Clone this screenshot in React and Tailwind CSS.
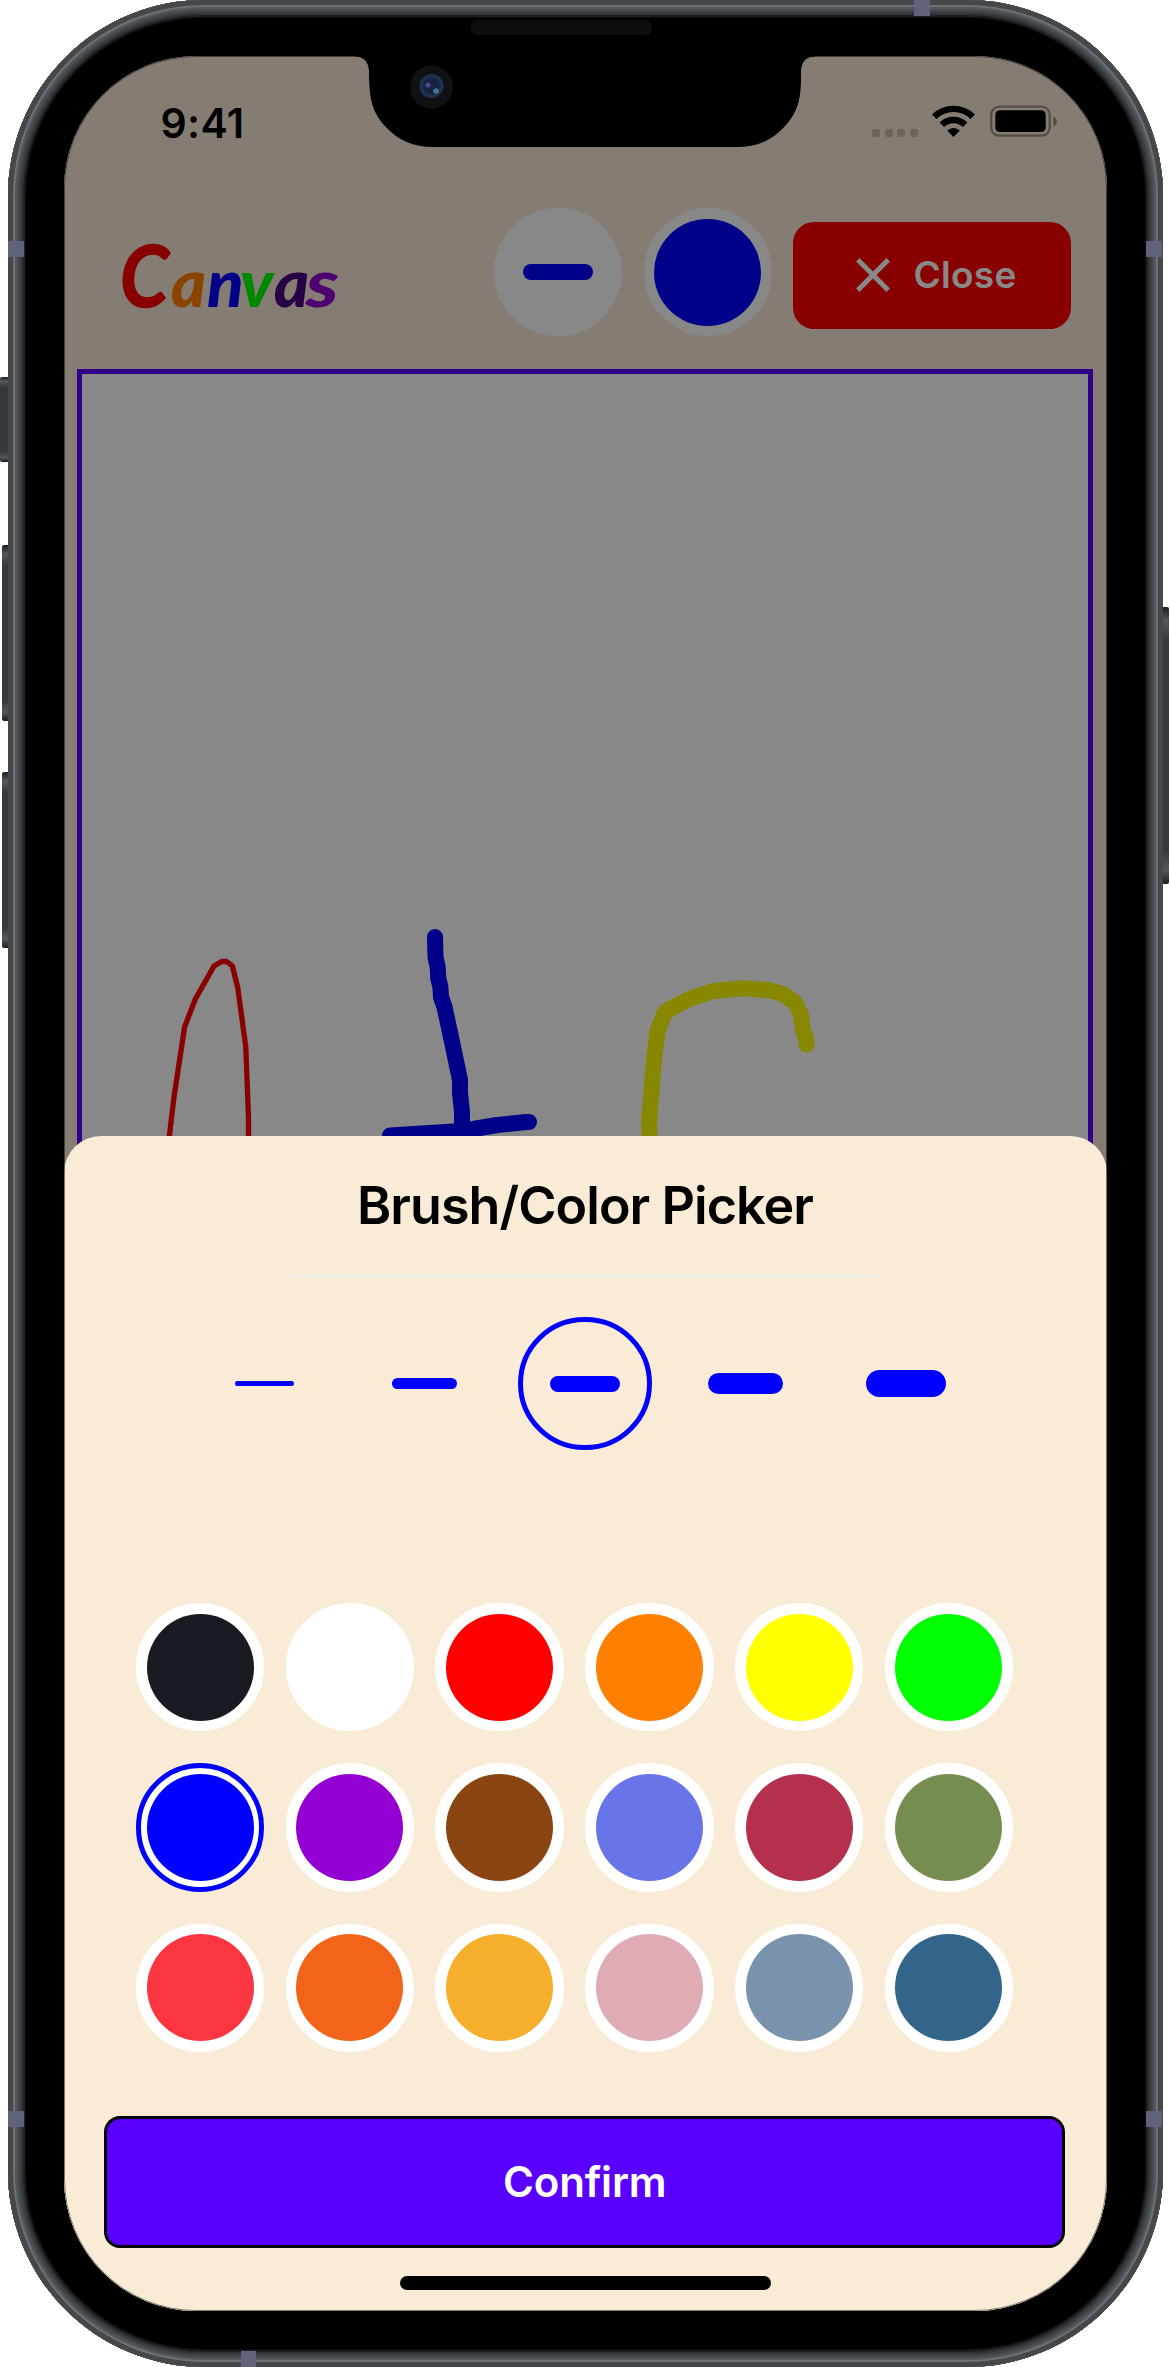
import React from "react";

const BRUSHES = [
  "w-[59px] h-[5.4px]",
  "w-[64.5px] h-[10.8px]",
  "w-[69.6px] h-[16px]",
  "w-[75px] h-[21.4px]",
  "w-[80.4px] h-[26.8px]",
];

const COLORS = [
  "bg-[#181b21]", "bg-white", "bg-[#ff0000]", "bg-[#ff8000]", "bg-[#ffff00]", "bg-[#00ff00]",
  "bg-[#0000ff]", "bg-[#9400d3]", "bg-[#8b4513]", "bg-[#6974e8]", "bg-[#b5304d]", "bg-[#758e4f]",
  "bg-[#fb3640]", "bg-[#f26419]", "bg-[#f6ae2d]", "bg-[#dfacb5]", "bg-[#7a93ac]", "bg-[#33658a]",
];

function SideButtons() {
  const button = "absolute bg-[linear-gradient(180deg,#1c1e21,#54585c_5%,#36383d_12%,#36383d_88%,#54585c_95%,#1c1e21)]";
  return (
    <>
      <div className={`${button} left-0 top-[377px] w-[10px] h-[85px] rounded-l-[2px]`} />
      <div className={`${button} left-[2px] top-[545px] w-[8px] h-[176px] rounded-l-[2px]`} />
      <div className={`${button} left-[2px] top-[772px] w-[8px] h-[176px] rounded-l-[2px]`} />
      <div className={`${button} right-[1px] top-[607px] w-[8px] h-[277px] rounded-r-[2px]`} />
    </>
  );
}

function AntennaBands() {
  const band = "absolute bg-[#5f6278]";
  return (
    <>
      <div className={`${band} left-[906px] top-0 w-[16px] h-[16px]`} />
      <div className={`${band} left-0 top-[241px] w-[16px] h-[16px]`} />
      <div className={`${band} right-px top-[241px] w-[16px] h-[16px]`} />
      <div className={`${band} left-0 top-[2111px] w-[16px] h-[16px]`} />
      <div className={`${band} right-px top-[2111px] w-[16px] h-[16px]`} />
      <div className={`${band} left-[233px] bottom-0 w-[15px] h-[16px]`} />
    </>
  );
}

function Notch() {
  return (
    <div className="absolute left-[291px] -top-px w-[460px] h-[92px] flex justify-center">
      <svg className="absolute inset-0" width="460" height="92" viewBox="0 0 460 92">
        <path
          d="M0 0H460V1.500C450 1.500 446.500 8 446 16C446.500 44 443 56 431 70C417 86 401 92 382 92H78C59 92 43 86 29 70C17 56 14 44 14 16C13.500 8 10 1.500 0 1.500Z"
          fill="#000"
        />
        <circle cx="76.500" cy="32" r="21.500" fill="#101113" />
        <circle cx="76.500" cy="31" r="12" fill="#1c3352" />
        <circle cx="76.500" cy="31" r="8.500" fill="#14233f" />
        <circle cx="73" cy="30" r="2.600" fill="#4b4a8c" />
        <circle cx="81" cy="36" r="2.800" fill="#437699" />
      </svg>
    </div>
  );
}

function StatusBar() {
  return (
    <div className="absolute inset-x-0 top-0 h-[130px]">
      <span className="absolute left-[96.500px] top-[43px] text-[41px] leading-[48px] font-semibold text-black tracking-[0.3px]">
        9:41
      </span>
      <div className="absolute left-[808px] top-[49px] flex items-end">
        <div className="flex gap-[4.500px]">
          {[0, 1, 2, 3].map((i) => (
            <i key={i} className="block size-[8px] rounded-[2px] bg-[#6d655c]" />
          ))}
        </div>
        <svg className="ml-[14.500px]" width="43" height="32" viewBox="0 0 43 32">
          <g fill="none" stroke="#000" strokeWidth="6.400">
            <path d="M2.200 11.800A27.500 27.500 0 0 1 40.800 11.800" />
            <path d="M9.800 19.800A16.600 16.600 0 0 1 33.200 19.800" />
          </g>
          <path d="M21.500 32L15.200 25.500A9 9 0 0 1 27.800 25.500Z" fill="#000" />
        </svg>
        <svg className="ml-[15px]" width="68" height="32" viewBox="0 0 68 32">
          <rect x="1.200" y="1.700" width="58.500" height="29" rx="8" fill="none" stroke="#544d46" strokeWidth="2.200" />
          <rect x="5.300" y="5.300" width="50.400" height="21.800" rx="4.500" fill="#000" />
          <path d="M63.500 11.500C68 13.500 68 19.500 63.500 21.500Z" fill="#544d46" />
        </svg>
      </div>
    </div>
  );
}

function Logo() {
  return (
    <div className="font-['Lato',sans-serif] italic font-black text-[67px] leading-[80px] flex items-baseline h-[100px] w-[220px]">
      <span className="font-bold text-[87px] w-[51px] origin-left scale-x-[0.9] text-[#ff0000] [-webkit-text-stroke:1.5px_#ff0000]">
        C
      </span>
      <span className="w-[36px] text-[#ff8000]">a</span>
      <span className="w-[33px] text-[#0000ff]">n</span>
      <span className="w-[34px] text-[#00ff00]">v</span>
      <span className="w-[32px] text-[#4b0082]">a</span>
      <span className="origin-left scale-x-[1.2] text-[#9400d3]">s</span>
    </div>
  );
}

function Header() {
  return (
    <header className="h-[313px] pt-[152px] pl-[56px] pr-[36px] flex items-start">
      <div className="mt-[26px]">
        <Logo />
      </div>
      <button className="ml-auto size-[128.400px] rounded-full bg-white flex items-center justify-center">
        <span className="w-[69.600px] h-[16px] rounded-full bg-[#0000ff]" />
      </button>
      <button className="ml-[21.200px] size-[128.400px] rounded-full bg-white flex items-center justify-center">
        <span className="size-[107px] rounded-full bg-[#0000ff]" />
      </button>
      <button className="ml-[21px] mt-[13.500px] w-[278px] h-[107px] rounded-[21px] bg-[#ff0000] text-white flex items-center pl-[63px]">
        <svg width="34" height="34" viewBox="0 0 34 34" stroke="currentColor" strokeWidth="5">
          <path d="M1.800 1.800L32.200 32.200M32.200 1.800L1.800 32.200" />
        </svg>
        <span className="ml-[23.500px] text-[37px] leading-[44px] font-semibold tracking-[0.3px]">Close</span>
      </button>
    </header>
  );
}

function DrawingCanvas() {
  return (
    <div className="ml-[13px] w-[1016px] h-[1500px] border-[5.300px] border-[#5900ff] bg-white">
      <svg
        width="1005"
        height="800"
        viewBox="82 374 1005 800"
        fill="none"
        strokeLinecap="round"
        strokeLinejoin="round"
      >
        <polyline
          points="168,1150 169.500,1135 174,1097 184.600,1027 195.400,999 214,966 221.700,961.500 226.600,961.500 232.400,966 237.800,988 245.800,1047 248.500,1118 248.500,1150"
          stroke="#ff0000"
          strokeWidth="5.300"
        />
        <g stroke="#0000ff" strokeWidth="16">
          <polyline points="435,937 435.500,957 437.800,968 438.200,978 440.400,987 441,997 444.500,1007 451.600,1040 460,1080 460,1093 462,1112 462,1130" />
          <polyline points="390,1135.500 461.500,1131 497,1125 526.600,1122 529,1122" />
        </g>
        <polyline
          points="650,1150 649,1121.700 654.300,1056.700 657.400,1031.700 665,1011.700 689,999 714.600,990.700 742.700,988.300 769.500,990.300 782.900,994 795.400,1002.700 801,1015 803.400,1031.700 806.500,1040 806.500,1044.500"
          stroke="#ffff00"
          strokeWidth="16"
        />
      </svg>
    </div>
  );
}

function PickerSheet() {
  return (
    <section className="absolute inset-x-0 bottom-0 h-[1175.500px] rounded-t-[37px] bg-[#faebd7] flex flex-col items-center">
      <h1 className="mt-[39px] mr-px text-[52px] leading-[62px] font-semibold tracking-[-0.950px] text-black">Brush/Color Picker</h1>
      <div className="mt-[38px] w-[586px] h-[3px] bg-[#efeeed]" />
      <div className="mt-[39.200px] mr-px flex gap-[26.700px]">
        {BRUSHES.map((size, i) => (
          <button
            key={size}
            className={`size-[133.700px] rounded-full border-[5.300px] flex items-center justify-center ${
              i === 2 ? "border-[#0000ff]" : "border-transparent"
            }`}
          >
            <span className={`${size} rounded-full bg-[#0000ff]`} />
          </button>
        ))}
      </div>
      <div className="mt-[152.500px] mr-[22px] grid grid-cols-6 gap-x-[21.300px] gap-y-[32px]">
        {COLORS.map((color, i) => (
          <button
            key={color}
            className={`size-[128.400px] rounded-full border-[5.300px] bg-white flex items-center justify-center ${
              i === 6 ? "border-[#0000ff]" : "border-white"
            }`}
          >
            <span className={`size-[107px] rounded-full ${color}`} />
          </button>
        ))}
      </div>
      <button className="mt-[64px] mr-[1.500px] w-[961px] h-[132px] rounded-[16px] border-[3px] border-black bg-[#5900ff] text-white text-[42px] leading-[50px] font-semibold tracking-[-0.2px]">
        Confirm
      </button>
      <div className="absolute bottom-[21.500px] left-[336px] w-[371px] h-[13.500px] rounded-full bg-black" />
    </section>
  );
}

export default function App() {
  return (
    <div className="relative w-[1170px] h-[2367px] overflow-hidden bg-white font-['Inter',sans-serif]">
      <SideButtons />
      <div className="relative ml-[8px] w-[1155px] h-[2367px] rounded-[196px] bg-black pt-[56px] pl-[56px] shadow-[inset_0_0_0_5px_#44484b,inset_0_0_0_7px_#6c7175,inset_0_0_0_9px_#53585b,inset_0_0_0_11px_#484c50,inset_0_0_0_13px_#3c4044,inset_0_0_0_15px_#303438,inset_0_0_0_17px_#1c1e21,inset_0_0_0_18px_#0b0c0d]">
        <AntennaBands />
        <div className="absolute left-[463px] top-[20px] w-[181px] h-[15px] rounded-[6px] bg-[#0e0e0e]" />
        <main className="relative w-[1043px] h-[2255px] rounded-[132px] overflow-hidden bg-[#faebd7]">
          <Header />
          <DrawingCanvas />
          <div className="absolute inset-0 bg-black/[0.467]" />
          <StatusBar />
          <PickerSheet />
          <div className="absolute inset-0 rounded-[132px] border border-black/50" />
          <Notch />
        </main>
      </div>
    </div>
  );
}
